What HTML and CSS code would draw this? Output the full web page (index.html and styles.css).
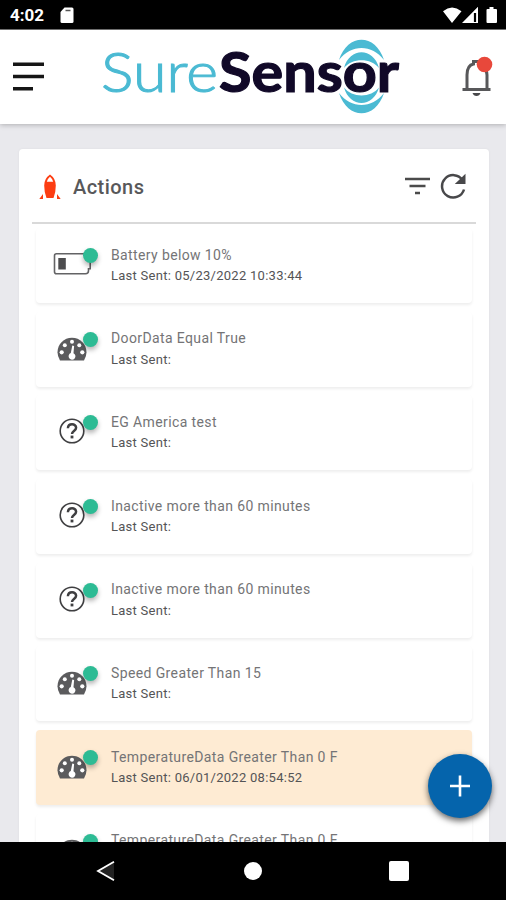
FILE: index.html
```html
<!DOCTYPE html>
<html lang="en">
<head>
<meta charset="utf-8">
<title>SureSensor Actions</title>
<link rel="stylesheet" href="styles.css">
</head>
<body>
<svg class="defs" width="0" height="0" aria-hidden="true">
  <symbol id="gauge" viewBox="0 0 30 24">
    <path fill="#5b5b5d" d="M3 23.500Q.5 19.500.5 15.200C.5 7 7 .7 15 .7s14.500 6.300 14.500 14.500q0 4.300-2.500 8.300Z"/>
    <g fill="#fff"><circle cx="15" cy="4.700" r="2"/><circle cx="7.800" cy="8.200" r="2"/><circle cx="22.300" cy="8.200" r="2"/><circle cx="4.700" cy="15.300" r="2.100"/><circle cx="25.300" cy="15.300" r="2.100"/><path d="m15.300 8.500 1.800.4-.6 7.300a3.400 3.400 0 1 1-2.700-.1Z"/></g>
  </symbol>
  <symbol id="help" viewBox="0 0 26 26">
    <circle cx="13" cy="13" r="11.800" fill="none" stroke="#3f3f41" stroke-width="1.600"/>
    <path d="M8.900 10.200c.2-5.400 8.300-5 8.200-.4 0 3.200-4.100 3.300-4.100 6.200" fill="none" stroke="#3f3f41" stroke-width="2.500"/>
    <rect x="11.600" y="17.600" width="2.800" height="2.800" fill="#3f3f41"/>
  </symbol>
  <symbol id="battery" viewBox="0 0 40 24">
    <path d="M3.500 1.800h30q2 0 2 2v3h1.700v10h-1.700v2q0 3-3 3h-29q-2 0-2-2v-16q0-2 2-2Z" fill="#fff" stroke="#636365" stroke-width="1.600"/>
    <path d="M5.300 6h7.500v11.500H5.300Z" fill="#4c4c4e"/>
  </symbol>
</svg>
<div class="phone">
  <div class="status">
    <span class="clock">4:02</span>
    <svg class="sd" width="14" height="17" viewBox="0 0 14 17"><path fill="#fff" d="M4.500.5H12q1.500 0 1.500 1.500v12.500q0 1.500-1.500 1.500H2Q.5 16 .5 14.500V5Z"/><path stroke="#555" stroke-width="1.500" d="M5.500 3.500h5"/></svg>
    <svg class="signals" width="58" height="18" viewBox="0 0 58 18"><path fill="#fff" d="M3 5.200Q12-2 21.500 5.200L12 17ZM38 .8V17H22Z"/><path stroke="#000" stroke-width="2.200" d="M35 7v9"/><path fill="#fff" d="M49.500 1h4v2H56q1 0 1 1v12q0 1-1 1h-8.500q-1 0-1-1V4q0-1 1-1h2Z"/></svg>
  </div>
  <header class="appbar">
    <svg width="32" height="30" viewBox="0 0 32 30"><path d="M0 2.300h31M0 14.500h31M0 26.800h20" stroke="#161616" stroke-width="3.600"/></svg>
    <svg class="logo" width="300" height="76" viewBox="0 0 300 76">
      <g fill="#4bbad3">
        <path d="M236 21C244.500-6 272.500-6 281 21 269 5 248 5 236 21Z"/>
        <path d="M241 29C246.500 8 270.500 8 276 29 268 18.500 249 18.500 241 29Z"/>
        <path d="M236 54C244.500 81 272.500 81 281 54 269 70 248 70 236 54Z"/>
        <path d="M241 48.500C246.500 69 270.500 69 276 48.500 268 59 249 59 241 48.500Z"/>
      </g>
      <text class="sure" x="-2" y="53" textLength="117" lengthAdjust="spacingAndGlyphs">Sure</text>
      <text class="sensor" x="116" y="53" textLength="180" lengthAdjust="spacingAndGlyphs">Sensor</text>
    </svg>
    <svg class="bell" width="32" height="42" viewBox="0 0 32 42"><path d="M1.500 33.500h28M6 33V19C6 11 10 8.500 12.500 8V5.500h5V8C21 8.500 26 12 26 19v14" fill="none" stroke="#58585a" stroke-width="3"/><path fill="#48484a" d="M11.500 37h8q-1 3-4 3t-4-3Z"/><circle cx="23.500" cy="8.500" r="7.800" fill="#e8483b"/></svg>
  </header>
  <main class="page">
    <section class="card">
      <div class="card-head">
        <svg width="22" height="26" viewBox="0 0 22 26"><path fill="#fc3d12" d="M11 .5q5.800 4 5.800 11 0 7-2.300 12.500h-7Q5.200 18.500 5.200 11.500 5.200 4.500 11 .5ZM4 20v5H.3ZM18 20v5h3.700Z"/><path fill="#fff" d="M11 2.700q2.500 2 3.200 5H7.800Q8.500 4.700 11 2.700Z"/></svg>
        <h1>Actions</h1>
        <svg class="filter" width="25" height="18" viewBox="0 0 25 18"><path d="M0 2h25M4.500 9h16M10 16h5" stroke="#4b4b4b" stroke-width="2.400"/></svg>
        <svg class="refresh" width="26" height="26" viewBox="0 0 26 26"><path d="M22.500 7A11.200 11.200 0 1 0 24 16.500" fill="none" stroke="#48484a" stroke-width="2.500"/><path fill="#48484a" d="M25.500.8V11H14.800Z"/></svg>
      </div>
      <ul class="list">
        <li><span class="ico"><svg class="bat"><use href="#battery"/></svg></span><div><p>Battery below 10%</p><small>Last Sent: 05/23/2022 10:33:44</small></div></li>
        <li><span class="ico"><svg class="gau"><use href="#gauge"/></svg></span><div><p>DoorData Equal True</p><small>Last Sent:</small></div></li>
        <li><span class="ico"><svg class="hlp"><use href="#help"/></svg></span><div><p>EG America test</p><small>Last Sent:</small></div></li>
        <li><span class="ico"><svg class="hlp"><use href="#help"/></svg></span><div><p>Inactive more than 60 minutes</p><small>Last Sent:</small></div></li>
        <li><span class="ico"><svg class="hlp"><use href="#help"/></svg></span><div><p>Inactive more than 60 minutes</p><small>Last Sent:</small></div></li>
        <li><span class="ico"><svg class="gau"><use href="#gauge"/></svg></span><div><p>Speed Greater Than 15</p><small>Last Sent:</small></div></li>
        <li class="alert"><span class="ico"><svg class="gau"><use href="#gauge"/></svg></span><div><p>TemperatureData Greater Than 0 F</p><small>Last Sent: 06/01/2022 08:54:52</small></div></li>
        <li><span class="ico"><svg class="gau"><use href="#gauge"/></svg></span><div><p>TemperatureData Greater Than 0 F</p></div></li>
      </ul>
    </section>
    <button class="fab" aria-label="Add"><svg width="20" height="22" viewBox="0 0 20 22"><path d="M0 11h20M10 .5v21" stroke="#fff" stroke-width="2.600"/></svg></button>
  </main>
  <nav class="navbar">
    <svg width="20" height="22" viewBox="0 0 20 22"><path d="M18 1.800 2 11l16 9.200" fill="#222" stroke="#fff" stroke-width="1.800"/></svg>
    <span class="home"></span>
    <span class="recent"></span>
  </nav>
</div>
</body>
</html>
```
FILE: styles.css
```css
* { box-sizing: border-box; margin: 0; padding: 0; }
body { font-family: Roboto, "Liberation Sans", sans-serif; background: #000; overflow: hidden; }
.defs { position: absolute; }
svg { display: block; flex: none; }
.phone { width: 506px; height: 900px; display: flex; flex-direction: column; overflow: hidden; }
.status { height: 30px; flex: none; background: #000; border-bottom: 1px solid #777; display: flex; align-items: center; padding: 1px 8px 0 10px; color: #fff; }
.clock { font-size: 17px; font-weight: 700; width: 50px; }
.signals { margin-left: auto; }
.appbar { height: 94px; flex: none; background: #fff; display: flex; align-items: center; padding: 0 13px; box-shadow: 0 1px 5px rgba(0,0,0,.25); z-index: 1; }
.logo { margin-left: 58px; overflow: visible; }
.sure, .sensor { font-family: Lato, sans-serif; font-size: 55px; }
.sure { font-weight: 300; fill: #4bbad3; stroke: #4bbad3; stroke-width: 1.1px; }
.sensor { font-weight: 700; fill: #110928; stroke: #110928; stroke-width: 1.2px; }
.bell { margin-left: auto; }
.page { height: 718px; flex: none; background: #e9e9ed; padding: 25px 17px 0 19px; overflow: hidden; position: relative; }
.card { height: 720px; background: #fff; border-radius: 4px; padding: 0 13px; box-shadow: 0 0 3px rgba(0,0,0,.05); }
.card-head { height: 75px; display: flex; align-items: center; border-bottom: 2px solid #d9d9d9; padding: 3px 10px 0 7px; }
h1 { font-size: 20px; font-weight: 500; color: #58585a; margin-left: 12px; letter-spacing: .45px; }
.filter { margin: -2px 10px 0 auto; }
.refresh { margin-top: -3px; }
.list { list-style: none; padding: 4px 4px 0 4px; display: grid; gap: 8.700px; }
.list li { height: 75px; border-radius: 4px; background: #fff; display: flex; box-shadow: 0 2px 3px rgba(0,0,0,.07); padding-left: 16px; }
.list .alert { background: #feebd3; }
.ico { width: 59px; flex: none; position: relative; }
.ico::after { content: ""; position: absolute; left: 31px; top: 20px; width: 15px; height: 15px; border-radius: 50%; background: #2dbb94; box-shadow: 0 3px 5px rgba(0,0,0,.3); }
.bat { width: 40px; height: 24px; margin: 24px 0 0 1px; }
.gau { width: 30px; height: 24px; margin: 25px 0 0 5px; }
.hlp { width: 26px; height: 26px; margin: 23px 0 0 7px; }
.list p { font-size: 14px; line-height: 20px; margin-top: 16.500px; color: #747476; letter-spacing: .38px; white-space: nowrap; }
.list small { display: block; font-size: 13px; line-height: 20px; margin-top: 1.500px; color: #545456; letter-spacing: .27px; white-space: nowrap; }
.fab { position: absolute; left: 428px; top: 630px; width: 64px; height: 64px; border: 0; border-radius: 50%; background: #0564ac; display: grid; place-items: center; box-shadow: 0 3px 6px rgba(0,0,0,.6); }
.navbar { height: 58px; flex: none; background: #000; display: flex; align-items: center; padding: 0 97px 0 96px; justify-content: space-between; }
.home { width: 18px; height: 18px; border-radius: 50%; background: #fff; }
.recent { width: 20px; height: 20px; border-radius: 2px; background: #fff; }
```
